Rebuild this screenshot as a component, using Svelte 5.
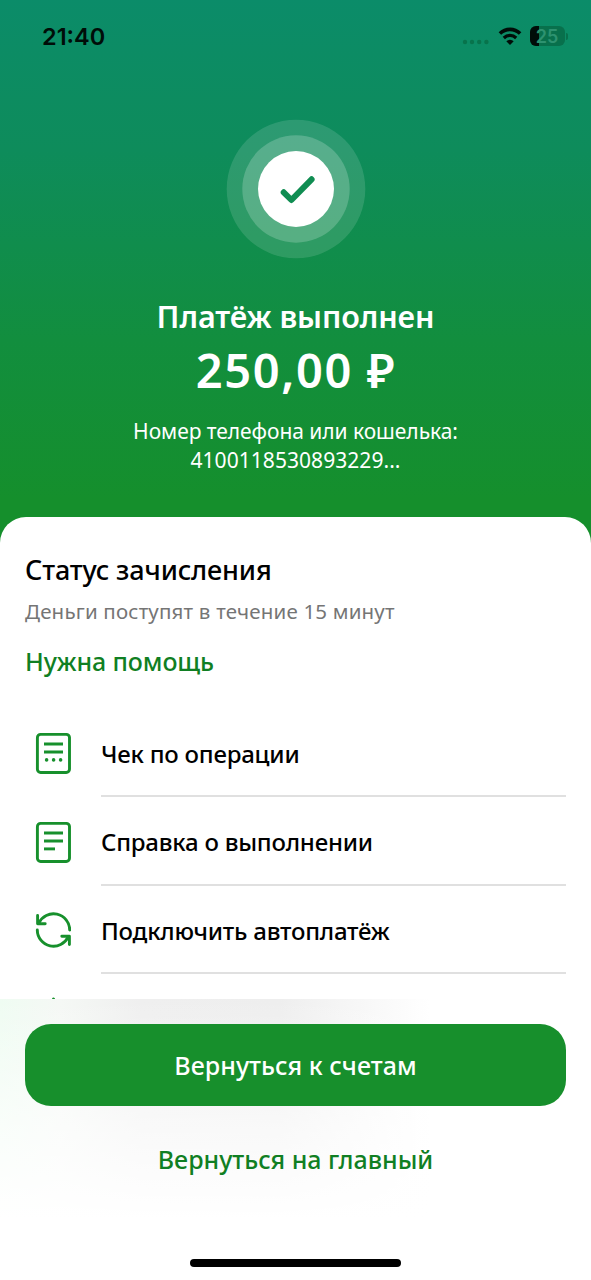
<script lang="ts">
	let time = '21:40';
	let battery = 25;

	let actions = [
		{ icon: 'receipt', label: 'Чек по операции' },
		{ icon: 'document', label: 'Справка о выполнении' },
		{ icon: 'repeat', label: 'Подключить автоплатёж' }
	];
</script>

<div class="screen">
	<header class="hero">
		<div class="status-bar">
			<span class="time">{time}</span>
			<div class="indicators">
				<svg class="signal" width="28" height="6" viewBox="0 0 28 6">
					<circle cx="3" cy="3" r="2.2" /><circle cx="10" cy="3" r="2.2" /><circle cx="17.2" cy="3" r="2.2" /><circle cx="24.4" cy="3" r="2.2" />
				</svg>
				<svg class="wifi" width="24" height="18" viewBox="0 0 24 18" fill="none" stroke="#000d08" stroke-width="3.6">
					<path d="M1.9 6.6a14.3 14.3 0 0 1 20.2 0" />
					<path d="M5.8 11a8.8 8.8 0 0 1 12.4 0" stroke-width="3.2" />
					<path d="M12 18l-3.7-3.8a5.2 5.2 0 0 1 7.4 0z" fill="#000d08" stroke="none" />
				</svg>
				<div class="battery">
					<div class="battery-body">
						<div class="battery-level" style="width: {battery}%"></div>
						<span>{battery}</span>
					</div>
					<div class="battery-cap"></div>
				</div>
			</div>
		</div>

		<svg class="success" width="140" height="140" viewBox="0 0 140 140">
			<circle cx="70" cy="70" r="69.3" fill="#fff" fill-opacity="0.13" />
			<circle cx="70" cy="70" r="53.7" fill="#fff" fill-opacity="0.2" />
			<circle cx="70" cy="70" r="38" fill="#fff" />
			<path d="M57.7 73.3l7.7 7.7 20.2-20.7" fill="none" stroke="#108d52" stroke-width="6" stroke-linecap="round" stroke-linejoin="round" />
		</svg>

		<h1>Платёж выполнен</h1>
		<p class="amount">250,00 ₽</p>
		<p class="recipient">Номер телефона или кошелька:<br /><span class="wallet">4100118530893229...</span></p>
	</header>

	<main class="sheet">
		<h2>Статус зачисления</h2>
		<p class="hint">Деньги поступят в течение 15 минут</p>
		<button type="button" class="help">Нужна помощь</button>

		<div class="actions">
			{#each actions as action}
				<button type="button" class="action">
					<svg class="action-icon" width="36" height="42" viewBox="0 0 36 42" fill="none" stroke="#17902c" stroke-width="2.9">
						{#if action.icon === 'repeat'}
							<g stroke-linecap="round">
								<path d="M34.7 21A16.2 16.2 0 0 0 3.8 14.2" />
								<path d="M2.3 21A16.2 16.2 0 0 0 33.2 27.8" />
								<path d="M2.6 6.4v8.3h7.6M34.4 35.6v-8.3h-7.6" stroke-linejoin="round" />
							</g>
						{:else}
							<rect x="2.4" y="2.4" width="32.1" height="38.1" rx="3.2" />
							<path d="M9 12h19M9 20h19" />
							{#if action.icon === 'receipt'}
								<g fill="#17902c" stroke="none">
									<circle cx="11.6" cy="27.9" r="1.8" /><circle cx="18.6" cy="27.9" r="1.8" /><circle cx="25.6" cy="27.9" r="1.8" />
								</g>
							{:else}
								<path d="M9 27.9h11" />
							{/if}
						{/if}
					</svg>
					<span class="action-label">{action.label}</span>
				</button>
			{/each}
			<!-- next action, cut off by the footer -->
			<div class="action last">
				<svg class="action-icon" width="36" height="42" viewBox="0 0 36 42" fill="none" stroke="#17902c" stroke-width="3" stroke-linejoin="round">
					<path d="M18.5 4l4.8 10.5 11.2 1.3-8.3 7.8 2.2 11.4-9.9-5.6L8.6 35l2.2-11.4-8.3-7.8 11.2-1.3z" />
				</svg>
			</div>
		</div>
	</main>

	<footer class="footer">
		<button type="button" class="primary">Вернуться к счетам</button>
		<button type="button" class="secondary">Вернуться на главный</button>
		<div class="home-indicator"></div>
	</footer>
</div>

<style>
	:global(body) {
		background: #fff;
	}

	.screen {
		display: flex;
		flex-direction: column;
		width: 591px;
		height: 1280px;
		overflow: hidden;
		font-family: 'Noto Sans', sans-serif;
		color: #000;
		background: #fff;
	}

	h1, h2, p {
		margin: 0;
	}

	button {
		font-family: inherit;
		background: none;
		border: none;
		padding: 0;
		cursor: pointer;
	}

	.hero {
		display: flex;
		flex-direction: column;
		align-items: center;
		flex: 0 0 545px;
		color: #fff;
		text-align: center;
		background: linear-gradient(180deg, #0b8c69 0, #0e8c5b 150px, #128e3e 340px, #158f2c 500px);
	}

	.status-bar {
		display: flex;
		justify-content: space-between;
		align-items: center;
		align-self: stretch;
		height: 72px;
		padding: 0 23px 0 42px;
		color: #000d08;
	}

	.time {
		font-family: Inter, sans-serif;
		font-size: 23.5px;
		font-weight: 600;
	}

	.indicators {
		display: flex;
		align-items: center;
	}

	.signal {
		margin: 12px 8px 0 0;
		fill: #08734c;
	}

	.wifi {
		margin-right: 8px;
	}

	.battery {
		display: flex;
		align-items: center;
		gap: 1px;
	}

	.battery-body {
		position: relative;
		width: 35px;
		height: 20px;
		border-radius: 6px;
		overflow: hidden;
		background: #08704c;
	}

	.battery-level {
		height: 100%;
		background: #000d08;
	}

	.battery-body span {
		position: absolute;
		inset: 0;
		font-family: Inter, sans-serif;
		font-size: 18px;
		font-weight: 600;
		line-height: 21px;
		text-indent: -1px;
		color: #2d9270;
	}

	.battery-cap {
		width: 2px;
		height: 7px;
		border-radius: 0 2px 2px 0;
		background: #08704c;
	}

	.success {
		margin-top: 47px;
	}

	h1 {
		margin-top: 36px;
		font-size: 30.5px;
		font-weight: 600;
		line-height: 42px;
		letter-spacing: -0.1px;
	}

	.amount {
		margin-top: 3px;
		font-size: 47px;
		font-weight: 600;
		line-height: 60px;
		letter-spacing: 1.6px;
		text-indent: 1px;
	}

	.recipient {
		margin-top: 17px;
		font-size: 21px;
		line-height: 28.5px;
		letter-spacing: -0.05px;
	}

	.wallet {
		letter-spacing: 0.05px;
	}

	.sheet {
		flex: 1;
		min-height: 0;
		margin-top: -28px;
		padding: 32px 25px 0;
		overflow: hidden;
		border-radius: 26px 26px 0 0;
		background: #fff;
	}

	h2 {
		font-size: 27px;
		font-weight: 500;
		line-height: 41px;
		letter-spacing: -0.15px;
	}

	.hint {
		margin-top: 6px;
		font-size: 20.5px;
		line-height: 30px;
		letter-spacing: 0.19px;
		color: #757575;
	}

	.help {
		display: block;
		margin-top: 15px;
		font-size: 25px;
		font-weight: 500;
		line-height: 40px;
		letter-spacing: -0.1px;
		color: #107f23;
	}

	.actions {
		margin-top: 28px;
	}

	.action {
		display: flex;
		align-items: center;
		width: 100%;
		height: 88.4px;
		color: #000;
		text-align: left;
	}

	.action-icon {
		flex: none;
		margin: 0 30px 0 10px;
	}

	.action-label {
		flex: 1;
		height: 100%;
		box-sizing: border-box;
		border-bottom: 2px solid #e0e0e0;
		font-size: 24px;
		font-weight: 500;
		line-height: 90.3px;
		letter-spacing: -0.22px;
	}

	.last {
		align-items: flex-start;
		padding-top: 21px;
	}

	.footer {
		display: flex;
		flex-direction: column;
		flex: 0 0 281px;
		box-sizing: border-box;
		padding: 25px 25px 0;
		background:
			linear-gradient(180deg, rgba(255, 255, 255, 0) 0, rgba(255, 255, 255, 0.6) 120px, #fff 220px),
			linear-gradient(90deg, #effcf2 0, #f5f8f5 60px, #efefef 140px, #eeeeee 280px, #f6f6f6 350px, #fff 430px);
	}

	.primary {
		height: 82px;
		border-radius: 26px;
		font-size: 25px;
		font-weight: 500;
		letter-spacing: 0.05px;
		color: #fff;
		background: #178f2c;
	}

	.secondary {
		align-self: center;
		margin-top: 33px;
		font-size: 25px;
		font-weight: 500;
		line-height: 40px;
		color: #107f23;
	}

	.home-indicator {
		align-self: center;
		width: 211px;
		height: 8px;
		margin-top: 80px;
		border-radius: 4px;
		background: #000;
	}
</style>
